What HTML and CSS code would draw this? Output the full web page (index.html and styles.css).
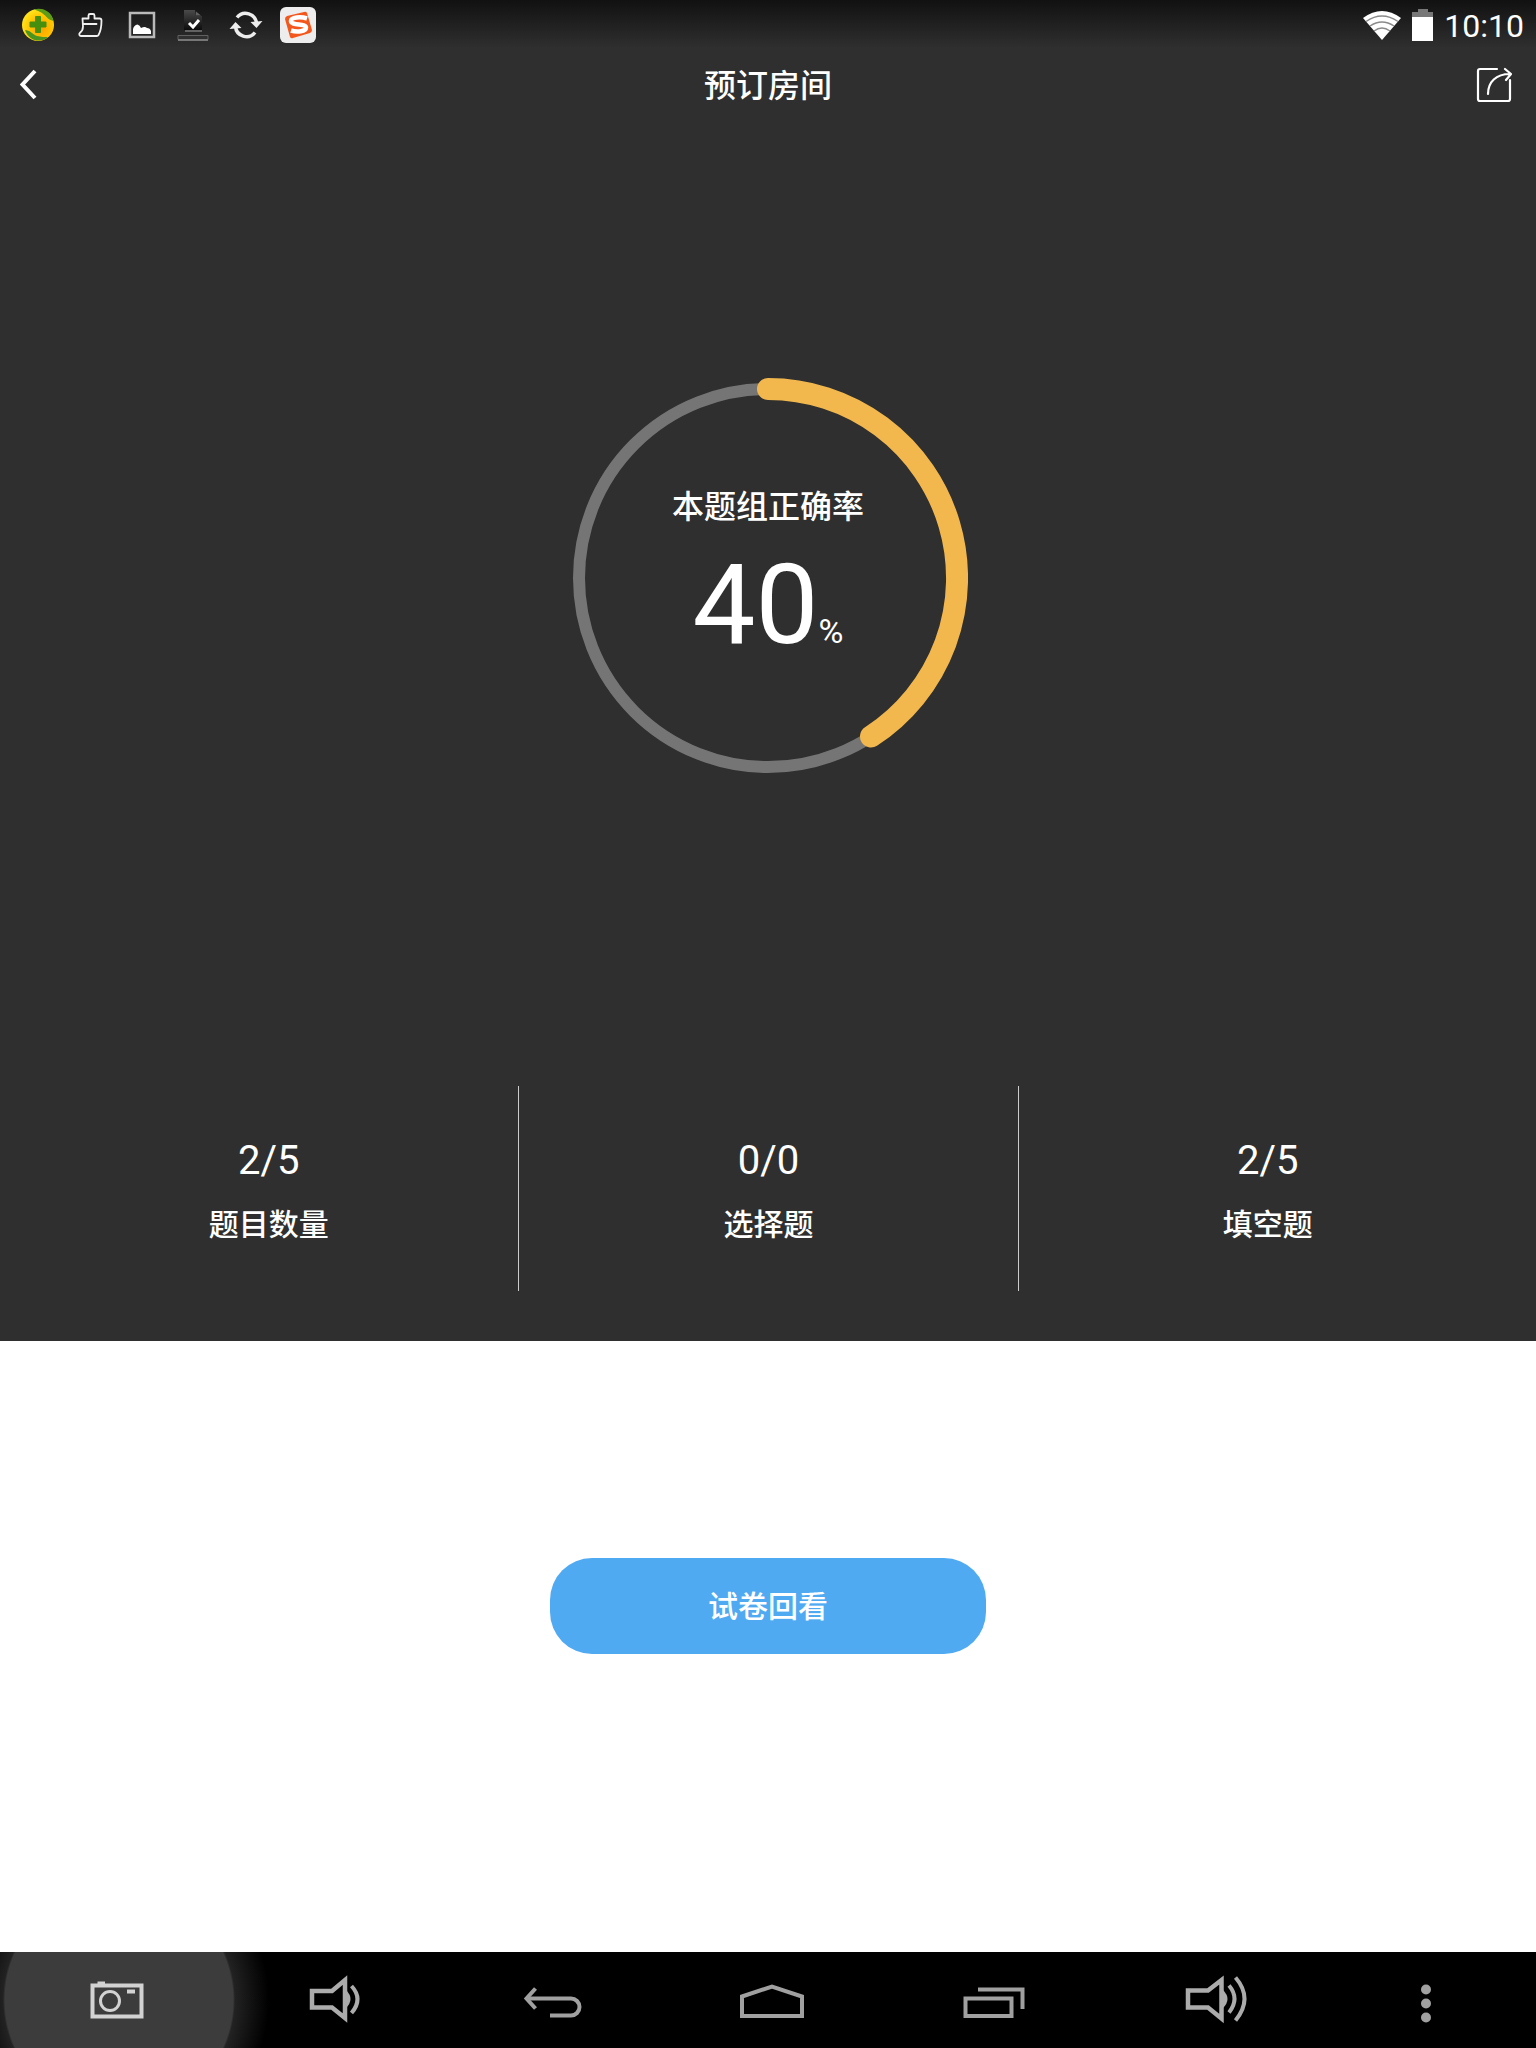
FILE: index.html
```html
<!DOCTYPE html>
<html lang="zh-CN">
<head>
<meta charset="utf-8">
<meta name="viewport" content="width=device-width, initial-scale=1">
<title>预订房间</title>
<link rel="stylesheet" href="styles.css">
</head>
<body>
<main class="report">
  <div class="status">
    <div class="status-icons">
      <svg viewBox="0 0 36 36" aria-hidden="true">
        <defs>
          <radialGradient id="ball" cx=".6" cy=".6" r=".6"><stop offset="0" stop-color="#ffa000"/><stop offset=".6" stop-color="#ffc400"/><stop offset="1" stop-color="#ffe21a"/></radialGradient>
        </defs>
        <circle cx="18" cy="18" r="16" fill="url(#ball)"/>
        <path d="M14 2.500C23 0 32 5 33.500 14c-2-1-4-1-6-3C24 7 20 4 14 2.500z" fill="#5c9c17"/>
        <path d="M5 23c5 0 7 4 12 6 4 1 8 1 11 1C22 36 9 35 5 23z" fill="#4b9420"/>
        <path d="M15.500 9.500h5v5.500h5.500v5h-5.500v5.500h-5v-5.500h-5.500v-5h5.500z" fill="#478f0c" stroke="#478f0c" stroke-width="1" stroke-linejoin="round"/>
      </svg>
      <svg viewBox="0 0 36 36" fill="none" stroke="#f0f0f0" stroke-width="1.800" stroke-linejoin="round" stroke-linecap="round" aria-hidden="true">
        <path d="M10.500 11.500h6V8.500a1.500 1.500 0 0 1 1.500-1.500h3a1.500 1.500 0 0 1 1.500 1.500v3h5a2 2 0 0 1 2 2c0 6-1 11-3 14.500a2 2 0 0 1-2 1H9c-1.500 0-2.500-2-1-3.300 2-1.500 3-4 3-6.200zM11 17h13.500"/>
      </svg>
      <svg viewBox="0 0 36 36" aria-hidden="true">
        <path d="M6 6h24v24H6z" fill="none" stroke="#b9b9b9" stroke-width="2.500"/>
        <path d="M9 27v-5q1-4 4.500-4.500Q16 18 17 21q4-2 6 0 3 0 4 3v3z" fill="#fff"/>
      </svg>
      <svg viewBox="0 0 36 36" aria-hidden="true">
        <defs><linearGradient id="sheet" x1="0" y1="0" x2="0" y2="1"><stop offset="0" stop-color="#4a4a4a"/><stop offset="1" stop-color="#0c0c0c"/></linearGradient></defs>
        <path d="M8 3h11l1 6h6v14H8z" fill="url(#sheet)"/>
        <path d="M20 4.500l5 4h-5z" fill="#626262"/>
        <path d="M13 16l4 4 6-7" fill="none" stroke="#fff" stroke-width="3"/>
        <path d="M9 24h17" stroke="#626262" stroke-width="2"/>
        <path d="M2 28.500v4h30v-4z" fill="#303030" stroke="#606060" stroke-width="1"/>
        <path d="M2 33h30" stroke="#777" stroke-width="2"/>
      </svg>
      <svg viewBox="0 0 36 36" aria-hidden="true">
        <g fill="none" stroke="#ededed" stroke-width="3.500"><path d="M9 10.500a11 11 0 0 1 19.500 6"/><path d="M27 25.500a11 11 0 0 1-19.500-6"/></g>
        <path d="M22.500 15l12-1-6 7zM13.500 21l-12 1 6-7z" fill="#ededed"/>
      </svg>
      <svg viewBox="0 0 36 36" aria-hidden="true">
        <rect width="36" height="36" rx="6" fill="#ededed"/>
        <path d="M7 9l17-4q2-1 3 1l5 17q0 2-2 3l-17 5q-2 1-3-1L5 12q0-2 2-3z" fill="#f4571c"/>
        <path d="M27 11.500c-6-2-16-1.500-16 2.500 0 5 15 2 15 6.500 0 4-9 5-15 3" fill="none" stroke="#fff" stroke-width="4.500"/>
      </svg>
    </div>
    <div class="status-info">
      <svg class="wifi" viewBox="0 0 40 32" aria-hidden="true">
        <path d="M1 9Q20-5 39 9L20 31z" fill="#fff"/>
        <g fill="none" stroke="#8a8a8a" stroke-width="1.500"><path d="M4 12.500q16-11 32 0"/><path d="M8 17q12-8 24 0"/><path d="M12 22q8-6 16 0"/></g>
      </svg>
      <svg class="battery" viewBox="0 0 22 32" aria-hidden="true">
        <path d="M0 3h6V0h10v3h5v5H0z" fill="#777"/><path d="M0 8h21v24H0z" fill="#fff"/>
      </svg>
      <time class="clock">10:10</time>
    </div>
  </div>

  <header class="bar">
    <button class="icon-button back" type="button" aria-label="返回">
      <svg viewBox="0 0 18 32" width="18" height="32" fill="none" stroke="#fff" stroke-width="4"><path d="M15 2L2.500 15.500 15 29"/></svg>
    </button>
    <h1 class="title">预订房间</h1>
    <button class="icon-button share" type="button" aria-label="分享">
      <svg viewBox="0 0 36 36" width="36" height="36" fill="none" stroke="#fff" stroke-width="2.200" stroke-linecap="round" stroke-linejoin="round"><path d="M21 2H4a2 2 0 0 0-2 2v28a2 2 0 0 0 2 2h28a2 2 0 0 0 2-2V13"/><path d="M12 27C12 15 20 7 34 7M29 2l6 5-5 6"/></svg>
    </button>
  </header>

  <section class="gauge">
    <svg class="ring" viewBox="0 0 400 400" fill="none" aria-hidden="true">
      <circle cx="200" cy="200" r="189" stroke="#757575" stroke-width="12"/>
      <path d="M200 11A189 189 0 0 1 303 358.500" stroke="#f2b84d" stroke-width="22" stroke-linecap="round"/>
    </svg>
    <div class="score">
      <p class="score-label">本题组正确率</p>
      <p class="score-value">40<span class="percent">%</span></p>
    </div>
  </section>

  <dl class="stats">
    <div class="stat"><dt>题目数量</dt><dd>2/5</dd></div>
    <div class="stat"><dt>选择题</dt><dd>0/0</dd></div>
    <div class="stat"><dt>填空题</dt><dd>2/5</dd></div>
  </dl>
</main>

<section class="actions">
  <button class="review" type="button">试卷回看</button>
</section>

<nav class="keys" aria-label="系统导航">
  <button class="key pressed" type="button" aria-label="截屏">
    <svg viewBox="0 0 96 96" fill="none" stroke="#d2d2d2"><path d="M21.500 33.500h49v31h-49z" stroke-width="4"/><path d="M26.500 31h7.500" stroke-width="3"/><circle cx="39" cy="49" r="9.500" stroke-width="3"/><path d="M56 39.500h8" stroke-width="4"/></svg>
  </button>
  <button class="key" type="button" aria-label="音量减">
    <svg viewBox="0 0 96 96" fill="none" stroke="#acacac"><path d="M23 39h20L56 28v38L43 55.500H23z" stroke-width="4.500"/><path d="M57 38q9 9 0 18z" fill="#acacac" stroke="none"/><path d="M62.500 34q12 13 0 27" stroke-width="4"/></svg>
  </button>
  <button class="key" type="button" aria-label="返回">
    <svg viewBox="0 0 96 96" fill="none" stroke="#a0a0a0" stroke-width="4"><path d="M19 46.500h45a8.500 8.500 0 0 1 0 17H43"/><path d="M28.500 36.500l-9 10 9 10"/></svg>
  </button>
  <button class="key" type="button" aria-label="主屏幕">
    <svg viewBox="0 0 96 96" fill="none" stroke="#a0a0a0" stroke-width="4"><path d="M17 44.500L47 34.500l30 10V64H17z"/></svg>
  </button>
  <button class="key" type="button" aria-label="最近任务">
    <svg viewBox="0 0 96 96" fill="none" stroke="#a0a0a0" stroke-width="4"><path d="M22.500 46.500h46v17.500h-46z"/><path d="M35 37.500h44.500V57"/></svg>
  </button>
  <button class="key" type="button" aria-label="音量加">
    <svg viewBox="0 0 96 96" fill="none" stroke="#acacac"><path d="M27 38.500h20L60.500 28v38.500L47 55.500H27z" stroke-width="4.500"/><path d="M62 38q9 9 0 18z" fill="#acacac" stroke="none"/><path d="M68 33.500q11 13 0 27M74.500 25.500q18 21 0 43" stroke-width="4"/></svg>
  </button>
  <button class="key" type="button" aria-label="菜单">
    <svg viewBox="0 0 96 96" fill="#a0a0a0"><circle cx="47" cy="37.500" r="5"/><circle cx="47" cy="51.500" r="5"/><circle cx="47" cy="65.500" r="5"/></svg>
  </button>
</nav>
</body>
</html>
```
FILE: styles.css
```css
* {
  box-sizing: border-box;
}

body {
  margin: 0;
  min-height: 100vh;
  display: flex;
  flex-direction: column;
  background: #fff;
  color: #fff;
  font-family: Roboto, "Noto Sans CJK SC", sans-serif;
}

h1, p, dl, dd {
  margin: 0;
}

button {
  margin: 0;
  padding: 0;
  border: 0;
  background: none;
  color: inherit;
  font: inherit;
}

svg {
  display: block;
}

.report {
  background: #2f2f2f;
  padding-bottom: 50px;
}

/* system status bar */
.status {
  height: 48px;
  padding: 2px 12px 0 20px;
  display: flex;
  align-items: center;
  justify-content: space-between;
  background: linear-gradient(#111, #2f2f2f);
}

.status-icons {
  display: flex;
  gap: 16px;
}

.status-icons svg {
  width: 36px;
  height: 36px;
}

.status-info {
  display: flex;
  align-items: center;
  gap: 10px;
}

.wifi {
  width: 40px;
  height: 32px;
}

.battery {
  width: 22px;
  height: 32px;
}

.clock {
  padding-top: 2px;
  font-size: 32px;
  line-height: 44px;
}

/* title bar */
.bar {
  height: 74px;
  padding: 0 24px 0 20px;
  display: grid;
  grid-template-columns: 1fr auto 1fr;
  align-items: center;
}

.back {
  justify-self: start;
}

.share {
  justify-self: end;
}

.title {
  padding: 2px 0 0 4px;
  font-size: 32px;
  font-weight: 500;
  line-height: 40px;
}

/* score ring */
.gauge {
  display: grid;
  justify-content: center;
  padding: 256px 0 308px;
}

.ring,
.score {
  grid-area: 1 / 1;
}

.ring {
  width: 400px;
  height: 400px;
}

.score {
  padding-top: 109px;
  text-align: center;
}

.score-label {
  font-size: 32px;
  font-weight: 500;
  line-height: 40px;
}

.score-value {
  margin-top: 22px;
  font-size: 112px;
  line-height: 112px;
}

.percent {
  font-size: 34px;
  line-height: 32px;
}

/* question totals */
.stats {
  display: grid;
  grid-template-columns: repeat(3, 1fr);
  padding: 0 19px;
}

.stat {
  display: flex;
  flex-direction: column-reverse;
  gap: 20px;
  padding: 51px 0 46px;
  text-align: center;
}

.stat + .stat {
  border-left: 1px solid #ccc;
}

.stat dt {
  font-size: 30px;
  font-weight: 500;
  line-height: 40px;
}

.stat dd {
  font-size: 40px;
  line-height: 48px;
}

.actions {
  flex: 1;
  padding: 217px 20px;
  display: flex;
  justify-content: center;
  align-items: flex-start;
}

.review {
  width: 436px;
  height: 96px;
  padding-top: 2px;
  border-radius: 42px;
  background: #4faaf2;
  font-size: 30px;
  font-weight: 500;
  line-height: 40px;
}

/* system navigation keys */
.keys {
  display: grid;
  grid-template-columns: repeat(7, 1fr);
  padding-left: 10px;
  background: #000;
  overflow: hidden;
}

.key {
  position: relative;
  display: flex;
  justify-content: center;
}

.key svg {
  position: relative;
  width: 96px;
  height: 96px;
}

.pressed::before {
  content: "";
  position: absolute;
  top: 50%;
  left: 50%;
  width: 320px;
  height: 320px;
  transform: translate(-50%, -50%);
  background: radial-gradient(circle closest-side, #3c3c3c 114px, #222 116px, #000 150px);
}
```
